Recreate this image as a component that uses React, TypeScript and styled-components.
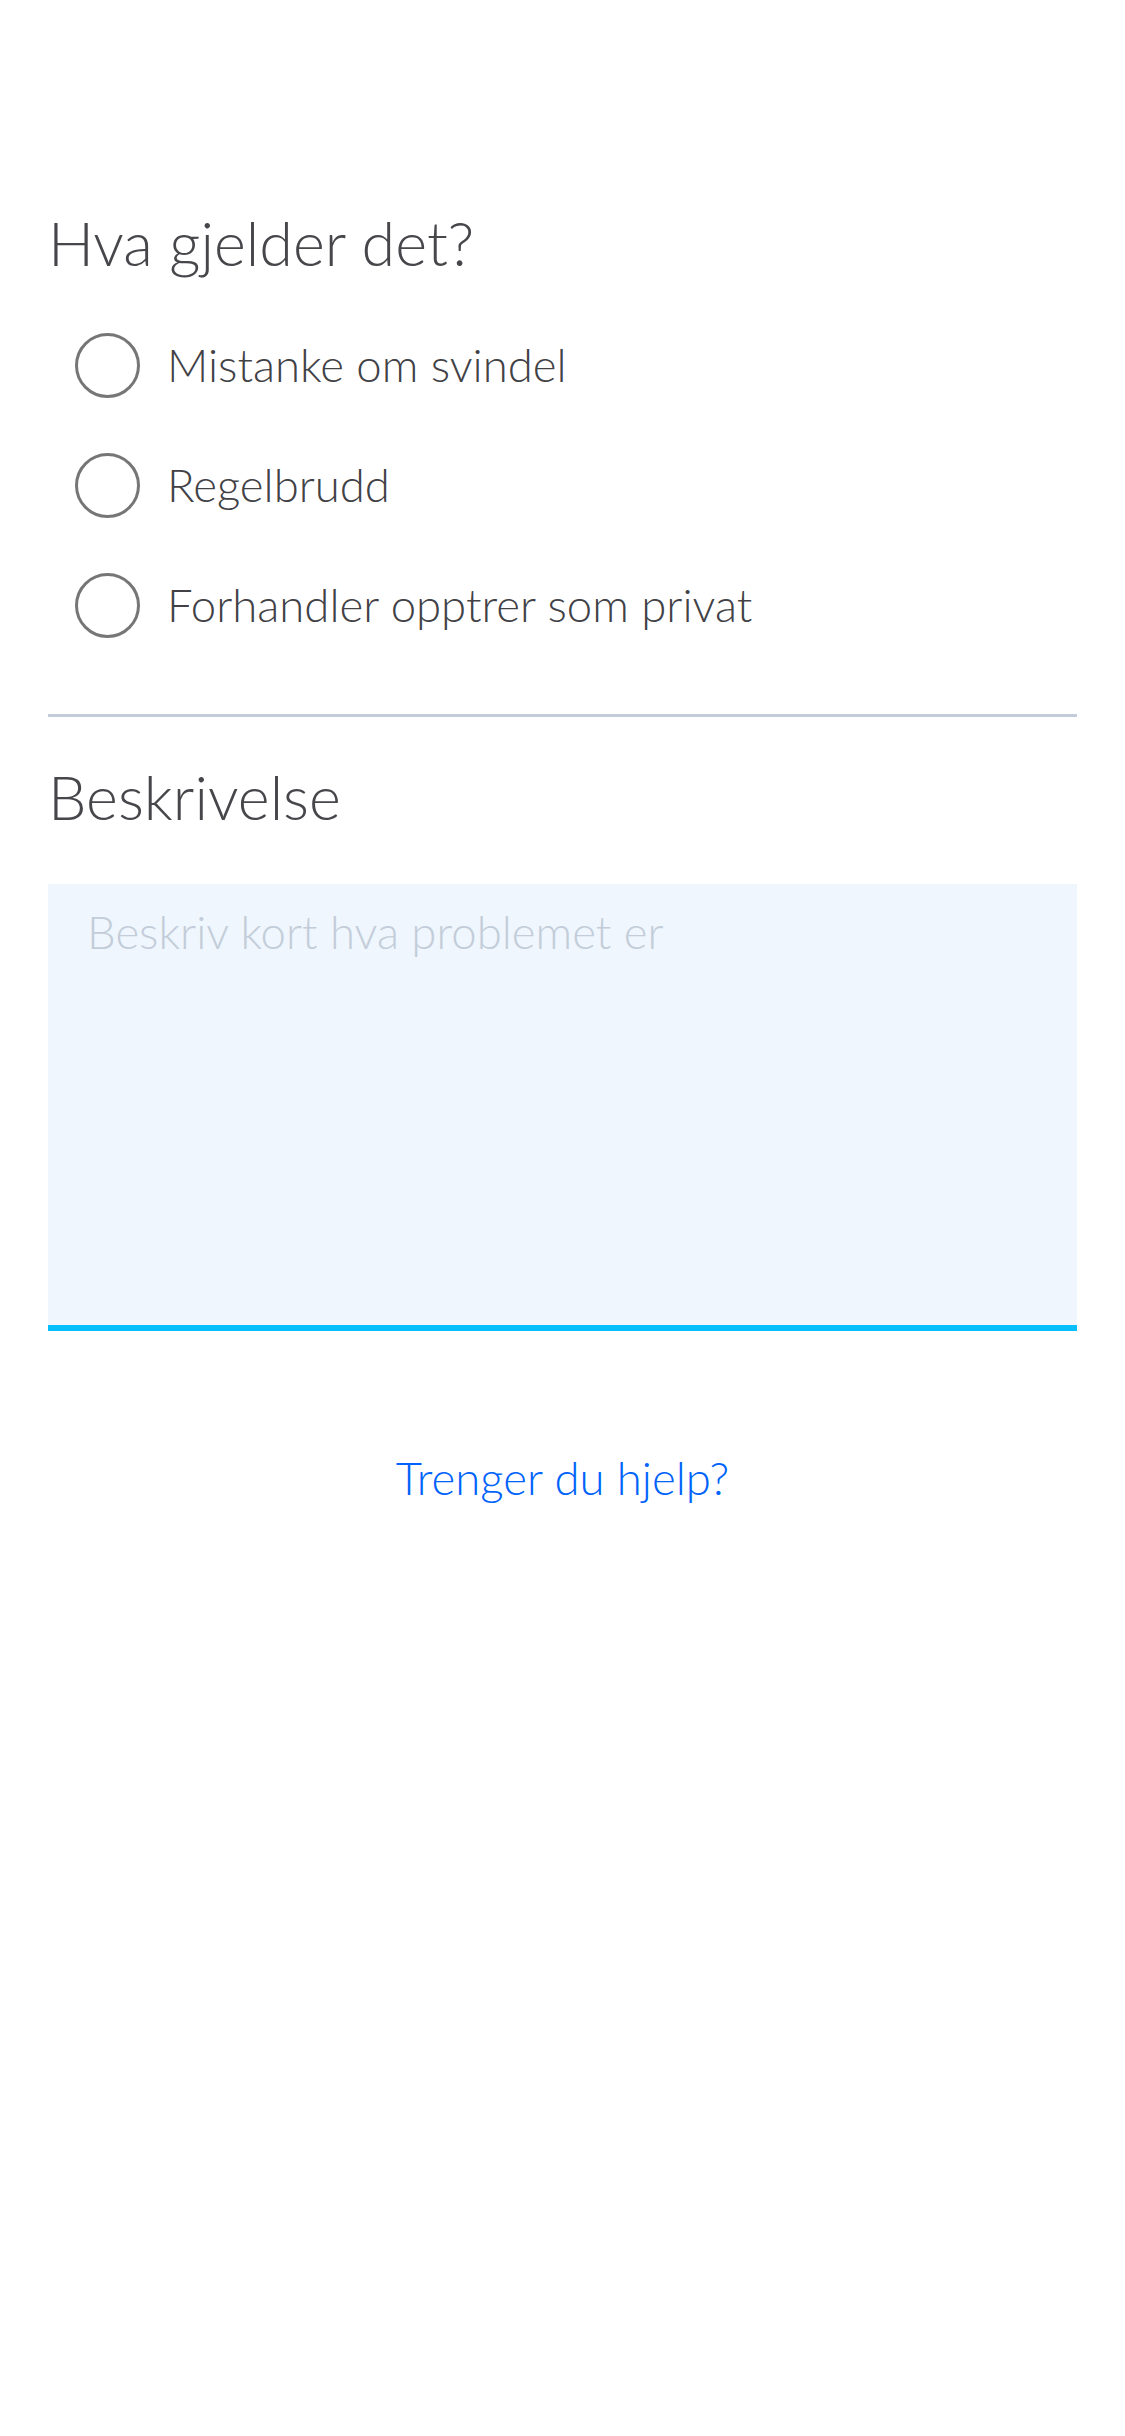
import React from "react";
import styled, { createGlobalStyle } from "styled-components";

const GlobalStyle = createGlobalStyle`
  html, body {
    margin: 0;
    padding: 0;
    background: #ffffff;
  }
  body {
    font-family: Lato, "Liberation Sans", sans-serif;
    color: #46464b;
  }
`;

const options = ["Mistanke om svindel", "Regelbrudd", "Forhandler opptrer som privat"];

const App: React.FC = () => {
  return (
    <>
      <GlobalStyle />
      <Page>
        <Heading>Hva gjelder det?</Heading>
        <RadioGroup>
          {options.map((label) => (
            <RadioRow key={label}>
              <RadioCircle />
              <RadioLabel>{label}</RadioLabel>
            </RadioRow>
          ))}
        </RadioGroup>
        <Divider />
        <Heading $spaced>Beskrivelse</Heading>
        <Description placeholder="Beskriv kort hva problemet er" />
        <HelpLink href="#">Trenger du hjelp?</HelpLink>
      </Page>
    </>
  );
};

export default App;

const Page = styled.main`
  display: flex;
  flex-direction: column;
  padding: 207px 48px 0;
  min-height: 2436px;
  box-sizing: border-box;
`;

const Heading = styled.h2<{ $spaced?: boolean }>`
  margin: ${(p) => (p.$spaced ? "44px 0 0" : "0")};
  font-size: 61px;
  line-height: 72px;
  font-weight: 300;
  color: #46464b;
`;

const RadioGroup = styled.div`
  display: flex;
  flex-direction: column;
  margin-top: 26px;
`;

const RadioRow = styled.label`
  display: flex;
  align-items: center;
  height: 120px;
  gap: 27px;
  padding-left: 27px;
  cursor: pointer;
`;

const RadioCircle = styled.span`
  width: 65px;
  height: 65px;
  box-sizing: border-box;
  border-radius: 50%;
  border: 3px solid #767676;
  flex-shrink: 0;
`;

const RadioLabel = styled.span`
  font-size: 45.5px;
  line-height: 54px;
  font-weight: 300;
  color: #414146;
`;

const Divider = styled.hr`
  margin: 49px 0 0;
  border: none;
  height: 3px;
  background: #c3cdd9;
`;

const Description = styled.textarea`
  margin-top: 51px;
  height: 447px;
  box-sizing: border-box;
  width: 100%;
  resize: none;
  border: none;
  border-bottom: 6px solid #06befb;
  background: #eff6fd;
  padding: 21px 39px;
  font-family: Lato, "Liberation Sans", sans-serif;
  font-size: 45.5px;
  font-weight: 300;
  line-height: 54px;
  color: #46464b;
  outline: none;

  &::placeholder {
    color: #c3cdd9;
  }
`;

const HelpLink = styled.a`
  align-self: center;
  margin-top: 120px;
  font-size: 45.5px;
  line-height: 54px;
  font-weight: 300;
  color: #0063fb;
  text-decoration: none;
`;
